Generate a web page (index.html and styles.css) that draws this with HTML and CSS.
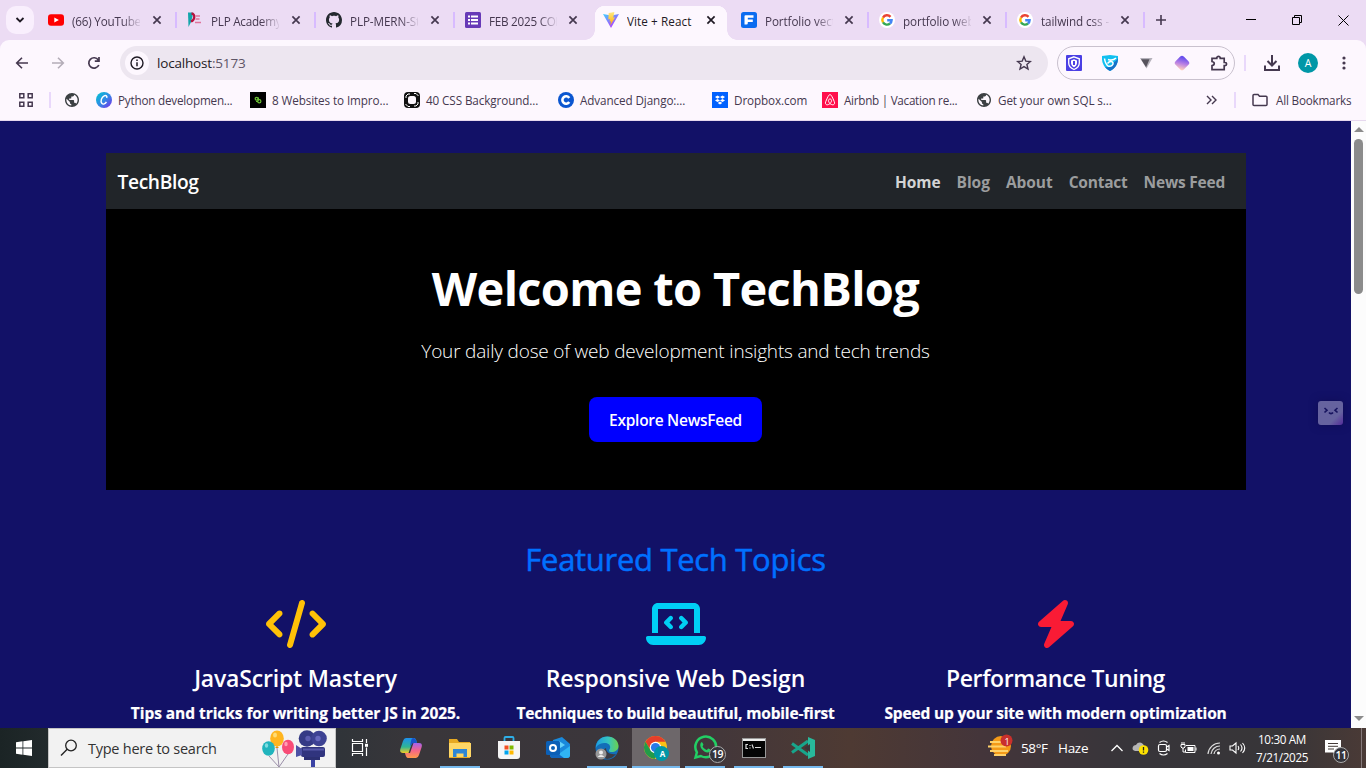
FILE: index.html
```html
<!DOCTYPE html>
<html lang="en">
<head>
<meta charset="utf-8">
<title>Vite + React</title>
<link rel="stylesheet" href="styles.css">
</head>
<body>
<svg class="defs" width="0" height="0">
  <defs>
    <symbol id="close" viewBox="0 0 10 10"><path d="M1.4 1.4l7.2 7.2M8.6 1.4L1.4 8.6" stroke="currentColor" stroke-width="1.7"/></symbol>
    <symbol id="google" viewBox="0 0 16 16"><circle cx="8" cy="8" r="8" fill="#fff"/><g fill="none" stroke-width="2.4"><path d="M11.5 4.9A4.6 4.6 0 0 0 4 5.6" stroke="#ea4335"/><path d="M4 5.6a4.7 4.7 0 0 0 0 4.8" stroke="#fbbc05"/><path d="M4 10.4a4.6 4.6 0 0 0 7 1.1" stroke="#34a853"/><path d="M11 11.5A4.4 4.4 0 0 0 12.6 8.2H8.2" stroke="#4285f4"/></g></symbol>
    <symbol id="globe" viewBox="2 2 20 20"><path fill="#3c4043" d="M12 2C6.480 2 2 6.480 2 12s4.480 10 10 10 10-4.480 10-10S17.520 2 12 2zm-1 17.930c-3.950-.49-7-3.850-7-7.930 0-.62.08-1.210.21-1.790L9 15v1c0 1.100.9 2 2 2v1.930zm6.900-2.540c-.26-.81-1-1.390-1.900-1.390h-1v-3c0-.55-.45-1-1-1H8v-2h2c.55 0 1-.45 1-1V7h2c1.100 0 2-.9 2-2v-.41c2.930 1.190 5 4.060 5 7.410 0 2.080-.8 3.970-2.100 5.390z"/></symbol>
  </defs>
</svg>
<div class="window">
  <div class="tabstrip">
    <button class="tab-search"><svg width="10" height="8" viewBox="0 0 10 8"><path d="M1.500 2l3.500 3.500L8.500 2" fill="none" stroke="#1f1a24" stroke-width="1.800"/></svg></button>
    <div class="tabs">
      <div class="tab wide first"><svg class="fav" viewBox="0 0 16 16"><rect y="2.200" width="16" height="11.600" rx="3" fill="#f00"/><path d="M6.300 5.400v5.200L10.900 8z" fill="#fff"/></svg><span class="name yt">(66) YouTube</span><svg class="x"><use href="#close"/></svg></div>
      <div class="tab wide"><svg class="fav" viewBox="0 0 16 16"><path d="M1 .5h4.500v4L4 10l-2.500 5z" fill="#12a5ab"/><path d="M4.500 1.500C9 2 7.500 8.500 4 9.500" fill="none" stroke="#b5123e" stroke-width="2.300"/><path d="M8.500 4h4.500M8.500 7h4M8 10.500h6" stroke="#e0749a" stroke-width="1.300"/></svg><span class="name plp">PLP Academy</span><svg class="x"><use href="#close"/></svg></div>
      <div class="tab wide"><svg class="fav" viewBox="0 0 16 16"><path fill="#24292f" d="M8 0C3.580 0 0 3.580 0 8c0 3.540 2.290 6.530 5.470 7.590.4.070.55-.17.55-.38 0-.19-.01-.82-.01-1.490-2.010.37-2.530-.49-2.690-.94-.09-.23-.48-.94-.82-1.130-.28-.15-.68-.52-.01-.53.63-.01 1.080.58 1.230.82.72 1.210 1.870.87 2.330.66.07-.52.28-.87.51-1.070-1.780-.2-3.640-.89-3.640-3.950 0-.87.31-1.590.82-2.150-.08-.2-.36-1.020.08-2.120 0 0 .67-.21 2.200.82.64-.18 1.320-.27 2-.27s1.360.09 2 .27c1.530-1.040 2.200-.82 2.200-.82.44 1.100.16 1.920.08 2.120.51.56.82 1.270.82 2.150 0 3.070-1.870 3.750-3.650 3.950.29.25.54.73.54 1.480 0 1.070-.01 1.930-.01 2.200 0 .21.15.46.55.38A8.010 8.010 0 0 0 16 8c0-4.420-3.580-8-8-8z"/></svg><span class="name mern">PLP-MERN-Stack</span><svg class="x"><use href="#close"/></svg></div>
      <div class="tab nosep"><svg class="fav" viewBox="0 0 16 16"><rect width="16" height="16" rx="1.500" fill="#673ab7"/><path d="M3 4.500h2M6 4.500h7M3 8h2M6 8h7M3 11.500h2M6 11.500h7" stroke="#fff" stroke-width="1.800"/></svg><span class="name feb">FEB 2025 COHORT</span><svg class="x"><use href="#close"/></svg></div>
      <div class="tab active nosep"><svg class="fav" viewBox="0 0 16 16"><defs><linearGradient id="v1" x2=".7" y2="1"><stop stop-color="#41d1ff"/><stop offset="1" stop-color="#bd34fe"/></linearGradient><linearGradient id="v2" x2="0" y2="1"><stop stop-color="#ffea83"/><stop offset="1" stop-color="#ffa800"/></linearGradient></defs><path d="M0 2l8 14 8-14-8 1.500z" fill="url(#v1)"/><path d="M11.400 0L5.700 1.100 5.300 7.500l1.800-.4-.5 2.600 1.500-.5-.9 4.300 5-8.200-2 .4z" fill="url(#v2)"/></svg><span class="name vite">Vite + React</span><svg class="x"><use href="#close"/></svg></div>
      <div class="tab"><svg class="fav" viewBox="0 0 16 16"><rect width="16" height="16" rx="2.500" fill="#0b6cf0"/><path d="M3.500 12.500V4.200q0-1 1-1h8v2.600H6.800v1.800h5v2.400h-5v1.200q0 1.300-1.300 1.300z" fill="#fff"/></svg><span class="name port">Portfolio vectors</span><svg class="x"><use href="#close"/></svg></div>
      <div class="tab"><svg class="fav"><use href="#google"/></svg><span class="name web">portfolio website</span><svg class="x"><use href="#close"/></svg></div>
      <div class="tab"><svg class="fav"><use href="#google"/></svg><span class="name tail">tailwind css - G</span><svg class="x"><use href="#close"/></svg></div>
    </div>
    <svg class="newtab" width="12" height="12" viewBox="0 0 12 12"><path d="M6 1v10M1 6h10" stroke="#45384f" stroke-width="1.600"/></svg>
    <div class="winctl">
      <svg width="10" height="10" viewBox="0 0 10 10"><path d="M0 4.500h10" stroke="#000"/></svg>
      <svg width="10" height="10" viewBox="0 0 10 10"><path d="M.5 2.500h7v7h-7zM2.500 2.500v-2h7v7h-2" fill="none" stroke="#000"/></svg>
      <svg width="11" height="11" viewBox="0 0 11 11"><path d="M.5.5l10 10M10.500.5l-10 10" stroke="#000"/></svg>
    </div>
  </div>

  <div class="toolbar">
    <svg class="nav" viewBox="0 0 16 16"><path d="M14 8H3M8 2.700L2.700 8 8 13.300" fill="none" stroke="#45384f" stroke-width="1.600"/></svg>
    <svg class="nav" viewBox="0 0 16 16"><path d="M2 8h11M8 2.700L13.300 8 8 13.300" fill="none" stroke="#b4adb8" stroke-width="1.600"/></svg>
    <svg class="nav" viewBox="0 0 16 16"><path d="M12.800 10A5.200 5.200 0 1 1 12.300 5M13 2v4.200H8.800" fill="none" stroke="#45384f" stroke-width="1.700"/></svg>
    <div class="omnibox">
      <span class="site"><svg width="14" height="14" viewBox="0 0 14 14"><circle cx="7" cy="7" r="6" fill="none" stroke="#1f1a24" stroke-width="1.400"/><path d="M7 6.200v4M7 3.600v1.500" stroke="#1f1a24" stroke-width="1.500"/></svg></span>
      <span class="url">localhost<i>:5173</i></span>
      <svg class="star" width="16" height="16" viewBox="0 0 16 16"><path d="M8 1.800l1.800 4.300 4.600.4-3.500 3 1.100 4.500L8 11.600 4 14l1.100-4.500-3.500-3 4.600-.4z" fill="none" stroke="#45384f" stroke-width="1.400"/></svg>
    </div>
    <div class="exts">
      <svg viewBox="0 0 16 16"><rect width="16" height="16" rx="1" fill="#4b3fe4"/><path d="M8 1.800l5.300 2V8c0 3-2.300 5.300-5.300 6.500C5 13.300 2.700 11 2.700 8V3.800z" fill="none" stroke="#fff" stroke-width="1.300"/><path d="M8 4.200l3 1.200V8c0 2-1.300 3.300-3 4.200-1.700-.9-3-2.200-3-4.200V5.400z" fill="#fff"/><path d="M8 6v4" stroke="#4b3fe4" stroke-width="2"/></svg>
      <svg viewBox="0 0 16 16"><path d="M0 1l8-1 8 1c.5 7-2 12-8 15C2 13-.5 8 0 1z" fill="#12c0f0"/><path d="M16 3c0 6-2.500 10.500-8 13-2.500-1.200-4-2.500-5-4 5 1 9-1 9-5 1.500-.5 3-2 4-4z" fill="#1671c9"/><path d="M2.500 3.500c.5 3.500 1.500 6 3.500 7.500 3 .8 5.500-1 5-3C10.500 6 7.500 6 5.500 8.500M6 4.500c3 1 6 .5 8-1.500" fill="none" stroke="#fff" stroke-width="1.500"/></svg>
      <svg viewBox="0 0 16 16"><path d="M2 3h12.500L8.500 13.500z" fill="#b5b2bb"/><path d="M3 4.200h8.500l-3.400 8z" fill="#56525c"/></svg>
      <svg viewBox="0 0 16 16"><defs><linearGradient id="dm" x1=".2" y1="0" x2=".8" y2="1"><stop offset=".1" stop-color="#6950ed"/><stop offset=".55" stop-color="#b980e4"/><stop offset="1" stop-color="#ffd0bd"/></linearGradient></defs><rect x="2.200" y="2.200" width="11.600" height="11.600" rx="2.500" transform="rotate(45 8 8)" fill="url(#dm)"/></svg>
      <svg class="puzzle" viewBox="0 0 18 18"><path d="M2 4.300h4.800V3.500a1.800 1.800 0 0 1 3.400 0v.8h4v4.200h.8a1.600 1.600 0 0 1 0 3.200h-.8v4H2v-4c3-.6 3-3.600 0-4.200z" fill="none" stroke="#45384f" stroke-width="1.700"/></svg>
    </div>
    <span class="bar"></span>
    <svg class="dl" width="18" height="18" viewBox="0 0 18 18"><path d="M9 1v10M4.500 7L9 11.500 13.500 7M2 11.500V16h14v-4.500" fill="none" stroke="#45384f" stroke-width="2"/></svg>
    <span class="avatar">A</span>
    <svg class="dots" width="4" height="16" viewBox="0 0 4 16"><g fill="#45384f"><circle cx="2" cy="3" r="1.600"/><circle cx="2" cy="8" r="1.600"/><circle cx="2" cy="13" r="1.600"/></g></svg>
  </div>

  <div class="bookmarks">
    <svg class="apps" width="14" height="14" viewBox="0 0 14 14"><path d="M.8.8h4v4h-4zM9.200.8h4v4h-4zM.8 9.200h4v4h-4zM9.200 9.200h4v4h-4z" fill="none" stroke="#45384f" stroke-width="1.500"/></svg>
    <span class="bar"></span>
    <svg class="globe"><use href="#globe"/></svg>
    <div class="bm"><svg viewBox="0 0 16 16"><defs><linearGradient id="cv" x2="1" y2="1"><stop stop-color="#00c9cf"/><stop offset=".5" stop-color="#2f8be6"/><stop offset="1" stop-color="#7d2ae8"/></linearGradient></defs><circle cx="8" cy="8" r="8" fill="url(#cv)"/><path d="M10.700 6c.8-2-.8-2.900-2.500-2.200C5.500 5 4.200 9.200 5.800 11.300c1.300 1.500 3.600.7 4.600-1.400" fill="none" stroke="#fff" stroke-width="1.400"/></svg><span class="b1">Python developmen...</span></div>
    <div class="bm"><svg viewBox="0 0 16 16"><rect width="16" height="16"/><circle cx="6.600" cy="6.700" r="1.400" fill="none" stroke="#6cc335" stroke-width="1.200"/><circle cx="9.300" cy="9.300" r="1.600" fill="none" stroke="#6cc335" stroke-width="1.200"/><path d="M8.500 5.500v3M6 9.500h2" stroke="#6cc335"/></svg><span class="b2">8 Websites to Impro...</span></div>
    <div class="bm"><svg viewBox="0 0 16 16"><rect width="16" height="16" rx="4" fill="#111"/><rect x="4" y="4" width="8" height="8" rx="2.500" fill="#fdf7fe"/><path d="M2 6V4l2-2h2M10 1.500h2L14.500 4M14 10v2l-2 2h-2M6 14.500H4L1.500 12" fill="none" stroke="#fff" stroke-width="1"/></svg><span class="b3">40 CSS Background...</span></div>
    <div class="bm"><svg viewBox="0 0 16 16"><circle cx="8" cy="8" r="8" fill="#0b56d0"/><path d="M11.200 6A3.700 3.700 0 1 0 11.200 10" fill="none" stroke="#fff" stroke-width="2.600"/></svg><span class="b4">Advanced Django:...</span></div>
    <div class="bm short"><svg viewBox="0 0 16 16"><rect width="16" height="16" fill="#0061fe"/><path d="M5.500 3.500L8 5 5.500 6.700 3 5zM10.500 3.500L13 5l-2.500 1.700L8 5zM5.500 6.900L8 8.500l-2.500 1.600L3 8.500zM10.500 6.900L13 8.500l-2.500 1.600L8 8.500zM8 9.500l2.300 1.500L8 12.500 5.700 11z" fill="#fff"/></svg><span class="b5">Dropbox.com</span></div>
    <div class="bm"><svg viewBox="0 0 16 16"><rect width="16" height="16" fill="#ff0f4b"/><path d="M8 11.500C5.500 9 6.400 7 8 7s2.500 2 0 4.500c-2 2-4.600 1.600-4.600-.6C3.400 9.800 6.200 4 6.800 3.300c.7-.8 1.700-.8 2.400 0 .6.700 3.400 6.500 3.400 7.600 0 2.200-2.600 2.600-4.600.6z" fill="none" stroke="#fff" stroke-width="1"/></svg><span class="b6">Airbnb | Vacation re...</span></div>
    <div class="bm last"><svg class="small"><use href="#globe"/></svg><span class="b7">Get your own SQL s...</span></div>
    <svg class="more" width="11" height="10" viewBox="0 0 11 10"><path d="M1 1l4 4-4 4M6 1l4 4-4 4" fill="none" stroke="#45384f" stroke-width="1.400"/></svg>
    <span class="bar b"></span>
    <svg class="folder" width="16" height="14" viewBox="0 0 16 14"><path d="M1 11.500v-9q0-1 1-1h4l1.500 1.700H14q1 0 1 1v7.300q0 1-1 1H2q-1 0-1-1z" fill="none" stroke="#45384f" stroke-width="1.500"/></svg>
    <span class="all">All Bookmarks</span>
  </div>

  <div class="viewport">
    <main class="page">
      <nav class="navbar">
        <a class="brand">TechBlog</a>
        <div class="links"><a class="on">Home</a><a class="l2">Blog</a><a class="l3">About</a><a class="l4">Contact</a><a class="l5">News Feed</a></div>
      </nav>
      <section class="hero">
        <h1>Welcome to TechBlog</h1>
        <p>Your daily dose of web development insights and tech trends</p>
        <button class="cta">Explore NewsFeed</button>
      </section>
      <h2>Featured Tech Topics</h2>
      <section class="topics">
        <article><svg width="60" height="48" viewBox="0 0 640 512" fill="#ffc107"><path d="M392.800 1.200c-17-4.900-34.700 5-39.600 22l-128 448c-4.900 17 5 34.700 22 39.600s34.700-5 39.600-22l128-448c4.900-17-5-34.700-22-39.600zm80.600 120.100c-12.500 12.500-12.500 32.800 0 45.300L562.700 256l-89.400 89.400c-12.500 12.500-12.500 32.800 0 45.300s32.800 12.500 45.300 0l112-112c12.500-12.500 12.500-32.800 0-45.300l-112-112c-12.500-12.500-32.800-12.500-45.300 0zm-306.700 0c-12.500-12.500-32.800-12.500-45.300 0l-112 112c-12.500 12.500-12.500 32.800 0 45.300l112 112c12.500 12.500 32.800 12.500 45.300 0s12.500-32.800 0-45.300L77.300 256l89.400-89.400c12.500-12.500 12.500-32.800 0-45.300z"/></svg><h3 class="h-js">JavaScript Mastery</h3><p class="p-js">Tips and tricks for writing better JS in 2025.</p></article>
        <article><svg width="60" height="48" viewBox="0 0 640 512" fill="#00cff5"><path d="M64 96c0-35.300 28.700-64 64-64H512c35.300 0 64 28.700 64 64V352H512V96H128V352H64V96zM0 403.200C0 392.600 8.600 384 19.200 384H620.800c10.600 0 19.200 8.600 19.200 19.200c0 42.400-34.400 76.800-76.800 76.800H76.800C34.400 480 0 445.600 0 403.200zM281 209l-31 31 31 31c9.400 9.400 9.400 24.600 0 33.900s-24.600 9.400-33.900 0l-48-48c-9.400-9.400-9.400-24.600 0-33.900l48-48c9.400-9.400 24.600-9.400 33.900 0s9.400 24.600 0 33.900zM393 175l48 48c9.400 9.400 9.400 24.600 0 33.900l-48 48c-9.400 9.400-24.600 9.400-33.900 0s-9.400-24.600 0-33.900l31-31-31-31c-9.400-9.400-9.400-24.600 0-33.900s24.600-9.400 33.900 0z"/></svg><h3 class="h-rw">Responsive Web Design</h3><p class="p-rw">Techniques to build beautiful, mobile-first</p></article>
        <article><svg width="42" height="48" viewBox="0 0 448 512" fill="#f91b35"><path d="M349.400 44.600c5.900-13.700 1.500-29.700-10.600-38.500s-28.600-8-39.900 1.800l-256 224c-10 8.800-13.600 22.900-8.900 35.300S50.700 288 64 288H175.500L98.600 467.400c-5.900 13.700-1.500 29.700 10.600 38.500s28.600 8 39.900-1.800l256-224c10-8.800 13.600-22.900 8.900-35.300s-16.600-20.700-30-20.700H272.500L349.400 44.600z"/></svg><h3 class="h-pt">Performance Tuning</h3><p class="p-pt">Speed up your site with modern optimization</p></article>
      </section>
      <div class="helper"><svg width="16" height="8" viewBox="0 0 16 8"><path d="M1.500 1l2.500 2.200-2.500 2.300M14.500 1L12 3.200l2.500 2.300M6 5.500c1 1.500 3 1.500 4 0" fill="none" stroke="#17145f" stroke-width="1.600"/></svg></div>
    </main>
    <div class="scroll"><i class="up"></i><span class="thumb"></span><i class="down"></i></div>
  </div>

  <div class="taskbar">
    <div class="start"><svg width="16" height="16" viewBox="0 0 16 16"><path d="M0 2.200L6.500 1.300v6.300H0zM7.300 1.200L16 0v7.600H7.300zM0 8.400h6.500v6.300L0 13.800zM7.300 8.400H16V16l-8.700-1.200z" fill="#fff"/></svg></div>
    <div class="search">
      <svg width="18" height="18" viewBox="0 0 18 18"><circle cx="11" cy="6.500" r="5.300" fill="none" stroke="#222" stroke-width="1.300"/><path d="M7.200 10.300L1 16.500" stroke="#222" stroke-width="1.400"/></svg>
      <span>Type here to search</span>
      <svg class="art" width="66" height="38" viewBox="0 0 66 38"><path d="M7 27l10 11L15 19M26 25L17 38" fill="none" stroke="#9a8ea8"/><ellipse cx="15" cy="9.500" rx="6.800" ry="8" fill="#ffb51f"/><path d="M13 19l2-2 2 2z" fill="#e89000"/><ellipse cx="6.500" cy="19.500" rx="6.300" ry="7.300" fill="#21b4bd"/><ellipse cx="26" cy="18" rx="6" ry="7.300" fill="#f84c77"/><ellipse cx="13" cy="6" rx="2" ry="2.500" fill="#ffdc74"/><ellipse cx="4.500" cy="16.500" rx="1.700" ry="2.200" fill="#80dce0"/><ellipse cx="24" cy="15" rx="1.700" ry="2.200" fill="#ff9eb4"/><path d="M49 28h4v10h-4z" fill="#3b43a5"/><path d="M42 27h16v4H42z" fill="#2b2f72"/><rect x="39" y="18" width="24" height="10" rx="2" fill="#30347e"/><path d="M34 16l6 4v6l-6 2z" fill="#4d52a5"/><circle cx="45" cy="9.500" r="8.300" fill="#343a85"/><circle cx="57" cy="9.500" r="7.800" fill="#3d4293"/><circle cx="46" cy="9.500" r="2.700" fill="#5a5cb0"/><circle cx="56" cy="9.500" r="2.700" fill="#6668be"/><path d="M41 20.500h21" stroke="#5658ab" stroke-width="2"/></svg>
    </div>
    <div class="apps-row">
      <div class="app view"><svg width="18" height="18" viewBox="0 0 18 18"><path d="M1.500 4.500h10v8h-10zM1.500 0v2.500h10V0M1.500 17v-2.500h10V17M15.500 0v4M15.500 8.500V17" fill="none" stroke="#fff" stroke-width="1.200"/><path d="M14 4.800h3v3h-3z" fill="#fff"/></svg></div>
      <div class="app"><svg width="24" height="24" viewBox="0 0 24 24"><defs><linearGradient id="c1" x2="0" y2="1"><stop stop-color="#1d90ee"/><stop offset=".6" stop-color="#30b693"/><stop offset="1" stop-color="#f4ce25"/></linearGradient><linearGradient id="c2" x2="0" y2="1"><stop stop-color="#a462ed"/><stop offset=".5" stop-color="#f46589"/><stop offset="1" stop-color="#ff9a4a"/></linearGradient></defs><path d="M7 2h8q2 0 3 5h-5L9.500 17H4Q-.5 17 2 11L4 5Q5 2 7 2z" fill="url(#c1)"/><path d="M17 22H9q-2 0-3-5h5L14.500 7H20q4.500 0 2 6l-2 6q-1 3-3 3z" fill="url(#c2)"/><path d="M14 2q3 0 4 5h-4l-3 3 1-5q.5-3 2-3z" fill="#1753ca"/></svg></div>
      <div class="app run"><svg width="24" height="24" viewBox="0 0 24 24"><path d="M1 3h8l2 3h11v16H1z" fill="#e7a922"/><path d="M1 7h22v14H1z" fill="#ffd766"/><path d="M5 13h14v8h-3.500v-3.500h-7V21H5z" fill="#2f86d4"/></svg></div>
      <div class="app"><svg width="24" height="24" viewBox="0 0 24 24"><path d="M7.500 6V2q0-1 1-1h7q1 0 1 1v4" fill="none" stroke="#2eaee7" stroke-width="1.800"/><path d="M1 5h22v15q0 3-3 3H4q-3 0-3-3z" fill="#f5f5f5"/><path d="M7.500 9.500h4v4h-4z" fill="#f25022"/><path d="M12.500 9.500h4v4h-4z" fill="#7fba00"/><path d="M7.500 14.500h4v4h-4z" fill="#00a4ef"/><path d="M12.500 14.500h4v4h-4z" fill="#ffb900"/></svg></div>
      <div class="app"><svg width="24" height="24" viewBox="0 0 24 24"><path d="M7 4l9-3 8 7v11q0 3-3 3H7q-3 0-3-3z" fill="#1989dc"/><path d="M13 5l6 4-8 5z" fill="#64d1fa"/><path d="M24 10L7 22h14q3 0 3-3z" fill="#30b5f3"/><path d="M4 12l14 10H7q-3 0-3-3z" fill="#1266bd"/><rect y="5" width="14" height="14" rx="1.500" fill="#0b60b7"/><circle cx="7" cy="12" r="3" fill="none" stroke="#fff" stroke-width="2"/></svg></div>
      <div class="app run"><svg width="24" height="24" viewBox="0 0 24 24"><defs><linearGradient id="e1"><stop stop-color="#1d9de2"/><stop offset=".55" stop-color="#36c5c0"/><stop offset="1" stop-color="#6bd14d"/></linearGradient></defs><circle cx="12" cy="12" r="11.500" fill="#136eb8"/><path d="M.8 12C1 5 6 .5 12.500.5c6.500 0 11 4.500 11 9.500 0 4-3.500 6-7 6-3 0-3-1.500-1.500-3.500C16 9 13 6.500 9 7 5 7.200 2 9 .8 12z" fill="url(#e1)"/><path d="M11 12c0 4 4 7 10 6-2 2.500-5 5-9 5-6-1-6-9-1-11z" fill="#3c3b42"/><circle cx="6" cy="18" r="5.500" fill="#989899"/><circle cx="6" cy="16.500" r="2" fill="#eee"/><path d="M2.500 21q3.500-4 7 0z" fill="#eee"/></svg></div>
      <div class="app run current"><svg width="26" height="26" viewBox="0 0 26 26"><circle cx="12.500" cy="12.500" r="11.500" fill="#fbc116"/><path d="M2.500 6.800A11.500 11.500 0 0 1 22.500 6.800H12.500L7.500 15.300z" fill="#e43e2b"/><path d="M2.500 6.800a11.500 11.500 0 0 0 9 17.200l5-8.700H7.500z" fill="#229b49"/><circle cx="12.500" cy="12.500" r="5.800" fill="#fff"/><circle cx="12.500" cy="12.500" r="4.600" fill="#2879e9"/><circle cx="18.500" cy="18.500" r="7.500" fill="#0097a7"/></svg><b class="mini">A</b></div>
      <div class="app run"><svg width="26" height="26" viewBox="0 0 26 26"><path d="M3.500 22.500l1.400-5.200A10.400 10.400 0 1 1 8.800 21z" fill="none" stroke="#22cf64" stroke-width="2.500"/><path d="M9 7.500c1.200-1 1.800.4 2.400 2 .2.800-1.100 1.600-.8 2.100 1 1.700 2.200 2.700 4 3.400.8 0 1.100-1.500 1.800-1.400 3 1.200 2.200 2 1.600 2.900-4 3.500-12.300-4-9-9z" fill="#22cf64"/></svg><b class="count">19</b></div>
      <div class="app run"><svg width="24" height="20" viewBox="0 0 24 20"><rect x=".5" y=".5" width="23" height="19" fill="#050505" stroke="#999"/><path d="M1 2h22" stroke="#eee" stroke-width="2"/><path d="M6 6.500H4v4h2M8 7v1M8 9.500v1M10 6.500l1.500 4M13 9.500h6" fill="none" stroke="#ddd" stroke-width="1.200"/></svg></div>
      <div class="app run"><svg width="24" height="24" viewBox="0 0 24 24"><path d="M1 7.500L17 19M1 16.500L17 5" stroke="#18a58b" stroke-width="3"/><path d="M17 1l7 3v16l-7 3z" fill="#28b99b"/><path d="M19 8v8l-5.500-4z" fill="#3a3438"/></svg></div>
    </div>
    <div class="tray">
      <svg class="weather" width="26" height="24" viewBox="0 0 26 24"><circle cx="13" cy="12" r="10" fill="#f49a18"/><path d="M2 8h17M0 12.500h18M2 17h18M6 21h12" stroke="#ffd168" stroke-width="2.200"/><circle cx="18.500" cy="6.500" r="6" fill="#c9302c"/></svg><b class="alert">1</b>
      <span class="temp">58°F</span><span class="haze">Haze</span>
      <svg class="chev" width="12" height="8" viewBox="0 0 12 8"><path d="M.5 7L6 1.500 11.500 7" fill="none" stroke="#fff" stroke-width="1.300"/></svg>
      <svg class="cloud" width="17" height="14" viewBox="0 0 17 14"><path d="M1 9C-.5 6 2 4 4 4c2-4 7-3 8 1 3 0 3 5 0 5H3z" fill="#b5b5b5"/><circle cx="11.500" cy="9" r="4.800" fill="#fce100"/><path d="M11.500 6v3.500M11.500 10.500v1.200" stroke="#222" stroke-width="1.300"/></svg>
      <svg class="meet" width="14" height="16" viewBox="0 0 14 16"><rect x="1.500" y="4.500" width="8" height="7" rx="1.500" fill="none" stroke="#fff" stroke-width="1.200"/><path d="M9.500 7l2.500-1.500v5L9.500 9M2.500 2.500q4-3 8 0M2.500 13.500q4 3 8 0" fill="none" stroke="#fff" stroke-width="1.200"/></svg>
      <svg class="batt" width="17" height="12" viewBox="0 0 17 12"><path d="M6 3.500h9v7H5.500v-3M16 5.500v3" fill="none" stroke="#fff"/><path d="M7.500 5H13.500v4H7.500z" fill="#fff"/><path d="M1 2.500h4v2.500l-1 1H2L1 5zM2 0v2M4 0v2M3 6v4h2" fill="none" stroke="#fff"/></svg>
      <svg class="wifi" width="14" height="14" viewBox="0 0 14 14"><g fill="none" stroke="#ddd" stroke-width="1.200"><path d="M1 13A12 12 0 0 1 13 2"/><path d="M4 13a9 9 0 0 1 9-8"/><path d="M7 13a6 6 0 0 1 6-5"/></g><circle cx="11.500" cy="12" r="1.500" fill="#fff"/></svg>
      <svg class="vol" width="17" height="14" viewBox="0 0 17 14"><path d="M1 5v4h2.500L7 12V2L3.500 5zM9 5q1.500 2 0 4M11.500 3.500q3 3.500 0 7M13.500 2q4.500 5 0 10" fill="none" stroke="#fff" stroke-width="1.100"/></svg>
      <div class="clock"><span>10:30 AM</span><span class="date">7/21/2025</span></div>
      <div class="note"><svg width="17" height="17" viewBox="0 0 17 17"><path d="M0 0h16v12.500h-4V16l-4-3.500H0z" fill="#fff"/><path d="M3 3.500h10M3 6.300h10M3 9h6" stroke="#453c39"/></svg><b class="count">11</b></div>
      <span class="peek"></span>
    </div>
  </div>
</div>
</body>
</html>
```
FILE: styles.css
```css
* { box-sizing: border-box; }
body { margin: 0; overflow: hidden; font-family: "Open Sans", "Noto Sans", sans-serif; }
svg { display: block; flex: none; }
.defs { position: absolute; }
button { border: 0; padding: 0; font-family: inherit; }
span, a, p, h1, h2, h3 { white-space: nowrap; }
.window { width: 1366px; height: 768px; display: flex; flex-direction: column; overflow: hidden; background: #ecdcf4; }

/* tab strip */
.tabstrip { height: 40px; display: flex; align-items: center; padding-left: 6px; flex: none; }
.tab-search { width: 28px; height: 28px; border-radius: 10px; background: #f9effd; display: flex; align-items: center; justify-content: center; }
.tabs { display: flex; height: 40px; padding-left: 5px; }
.tab { width: 138px; height: 40px; padding-left: 9px; display: flex; align-items: center; position: relative; }
.tab.wide { width: 139px; }
.tab::after { content: ""; position: absolute; right: 1px; top: 12px; width: 2px; height: 16px; background: #d8bbff; }
.tab.nosep::after { display: none; }
.fav { width: 16px; height: 16px; }
.name { width: 68px; margin: 2px 0 0 8px; overflow: hidden; font-size: 11.700px; line-height: 20px; color: #45384f; letter-spacing: -.1px; -webkit-mask-image: linear-gradient(90deg, #000 50px, transparent 70px); }
.yt { letter-spacing: -.2px; }
.plp, .feb { letter-spacing: -.25px; }
.vite { letter-spacing: .08px; }
.x { width: 10px; height: 10px; margin-left: 11px; color: #45384f; }
.wide .x { margin-left: 12px; }
.active .name { color: #1f1a24; -webkit-mask-image: none; }
.active .x { color: #1f1a24; }
.tab.active > * { z-index: 1; }
.tab.active::before { content: ""; position: absolute; left: -9px; right: -5px; top: 6px; bottom: 0;
  background:
    radial-gradient(circle at 0 24px, transparent 9.500px, #fdf7fe 10px) left bottom / 10px 34px no-repeat,
    radial-gradient(circle at 10px 24px, transparent 9.500px, #fdf7fe 10px) right bottom / 10px 34px no-repeat;
  clip-path: polygon(0 24px, 100% 24px, 100% 100%, 0 100%); }
.tab.active { background: linear-gradient(#fdf7fe, #fdf7fe) 1px 16px / 132px 24px no-repeat, radial-gradient(circle at 11px 16px, #fdf7fe 10px, transparent 10.500px) 0 0 / 12px 16px no-repeat, radial-gradient(circle at 3px 16px, #fdf7fe 10px, transparent 10.500px) 120px 0 / 14px 16px no-repeat, linear-gradient(#fdf7fe, #fdf7fe) 11px 6px / 112px 10px no-repeat; }
.newtab { margin-left: 9px; }
.winctl { margin-left: auto; display: flex; align-items: center; gap: 36px; padding-right: 17px; }

/* toolbar */
.toolbar { height: 46px; flex: none; background: #fdf7fe; border-radius: 9px 9px 0 0; display: flex; align-items: center; padding-left: 14px; }
.nav { width: 16px; height: 16px; margin-right: 20px; }
.omnibox { width: 928px; height: 34px; margin-left: -2px; border-radius: 17px; background: #ede6f0; display: flex; align-items: center; padding: 0 16px 0 5px; }
.site { width: 24px; height: 24px; border-radius: 12px; background: #fdf7fe; display: flex; align-items: center; justify-content: center; }
.url { font-size: 13.500px; margin-left: 8px; color: #1f1a24; letter-spacing: -.18px; }
.url i { font-style: normal; color: #5e5566; }
.star { margin-left: auto; }
.exts { margin-left: 9px; width: 178px; height: 34px; border: 1px solid #c9c1ce; border-radius: 17px; display: flex; align-items: center; padding-left: 8px; gap: 20px; }
.exts svg { width: 16px; height: 16px; }
.exts .puzzle { width: 18px; height: 18px; }
.bar { width: 2px; height: 16px; background: #e9d8fb; flex: none; }
.toolbar .bar { margin-left: 9px; }
.dl { margin-left: 17px; }
.avatar { width: 20px; height: 20px; margin-left: 17px; border-radius: 10px; background: #0097a7; color: #fff; font-size: 10.500px; line-height: 20px; text-align: center; }
.dots { margin-left: 24px; }

/* bookmarks */
.bookmarks { height: 35px; flex: none; background: #fdf7fe; border-bottom: 1px solid #e6d8ee; display: flex; align-items: center; padding: 0 0 6px 19px; font-size: 11.700px; color: #45384f; }
.bookmarks .bar { margin-left: 16px; }
.globe { width: 14px; height: 14px; margin: 0 17px 0 14px; }
.bm { width: 154px; display: flex; align-items: center; gap: 6px; letter-spacing: -.1px; }
.b1 { letter-spacing: -.2px; }
.b6 { letter-spacing: -.27px; }
.bm svg { width: 16px; height: 16px; }
.bm svg.small { width: 14px; height: 14px; }
.bm.short { width: 110px; }
.bm.last { padding-left: 1px; gap: 7px; }
.more { margin-left: 76px; }
.bookmarks .bar.b { margin-left: 17px; }
.folder { margin-left: 16px; }
.all { margin-left: 8px; letter-spacing: -.2px; }

/* page */
.viewport { height: 607px; flex: none; display: flex; }
.page { width: 1351px; height: 607px; background: #121167; padding: 32px 105.500px 0; overflow: hidden; position: relative; }
.navbar { height: 56px; background: #212529; display: flex; align-items: center; justify-content: space-between; padding: 0 20.500px 0 12px; }
.brand { color: #fff; font-size: 19.200px; font-weight: 600; letter-spacing: -.35px; }
.links { display: flex; gap: 16px; font-size: 15.500px; font-weight: 700; color: #9b9d9e; letter-spacing: -.05px; padding-top: 1px; }
.links .on { color: #d3d4d5; }
.l4, .l5 { letter-spacing: -.22px; }
.hero { height: 281px; background: #000; color: #fff; padding-top: 50px; display: flex; flex-direction: column; align-items: center; }
h1 { margin: 0; font-size: 47px; line-height: 58px; font-weight: 700; letter-spacing: -.680px; }
.hero p { margin: 19px 0 0; font-size: 19px; line-height: 30px; font-weight: 300; letter-spacing: -.19px; }
.cta { margin-top: 31px; width: 173px; height: 45px; border-radius: 8px; background: #00f; color: #fff; font-size: 15.500px; font-weight: 600; letter-spacing: -.28px; }
h2 { margin: 49px 0 0; text-align: center; font-size: 31px; line-height: 40px; font-weight: 500; letter-spacing: -.3px; color: #0070ff; -webkit-text-stroke: .5px #0070ff; }
.topics { display: grid; grid-template-columns: repeat(3, 380px); margin-top: 21px; color: #fff; }
article { display: flex; flex-direction: column; align-items: center; }
h3 { margin: 16px 0 0; font-size: 23px; line-height: 29px; font-weight: 600; }
.h-js { letter-spacing: -.18px; }
.h-rw { letter-spacing: -.1px; }
.h-pt { letter-spacing: -.4px; }
article p { margin: 8px 0 0; font-size: 15.500px; line-height: 24px; font-weight: 700; -webkit-text-stroke: .2px #fff; }
.p-js { letter-spacing: -.05px; }
.p-rw, .p-pt { letter-spacing: -.17px; }
.helper { position: absolute; left: 1318px; top: 280px; width: 25px; height: 24px; border-radius: 3px; background: linear-gradient(135deg, #66639f 70%, #542b9a); display: flex; justify-content: center; padding-top: 6px; box-shadow: 0 0 8px #100d55; }
.scroll { width: 15px; background: #fcfcfc; display: flex; flex-direction: column; align-items: center; }
.up, .down { border: 5px solid transparent; border-top: 0; border-bottom: 5px solid #8b8b8b; margin-top: 6px; }
.thumb { width: 9px; height: 155px; border-radius: 5px; background: #8b8b8b; margin-top: 7px; }
.down { transform: rotate(180deg); margin: auto 0 7px; }

/* taskbar */
.taskbar { height: 40px; flex: none; display: flex; background: linear-gradient(90deg, #1b2425 0, #222a2c 50px, #303439 340px, #39363a 420px, #3b363b 600px, #43373a 720px, #4e3a33 850px, #44353a 980px, #37353a 1130px, #373538 1280px, #4a3a36 1366px); }
.start { width: 48px; padding: 12px 0 0 16px; }
.search { width: 288px; background: #f2f2f2; border: 1px solid #c4c4c4; display: flex; align-items: center; padding-left: 11px; color: #333; font-size: 14.500px; letter-spacing: -.25px; }
.search span { width: 174px; margin-left: 10px; }
.apps-row { display: flex; gap: 1px; }
.app { width: 48px; height: 40px; display: flex; align-items: center; justify-content: center; position: relative; }
.app.view { margin-right: 2px; }
.app.run::after { content: ""; position: absolute; left: 4px; right: 4px; bottom: 0; height: 2px; background: #76b9ed; }
.app.current { background: #6d676a; }
.app.current::after { left: 0; right: 0; }
.mini { position: absolute; left: 23px; top: 19px; width: 15px; text-align: center; color: #fff; font-size: 8px; line-height: 14px; }
.count { position: absolute; left: 28px; top: 18px; width: 17px; height: 17px; border-radius: 9px; border: 1px solid #aaa; background: #35343a; color: #fff; font-size: 10.500px; font-weight: 600; line-height: 15px; text-align: center; letter-spacing: -.6px; }
.tray { margin-left: auto; display: flex; align-items: center; color: #fff; font-size: 13.500px; position: relative; }
.alert { position: absolute; left: 14px; top: 8px; width: 10px; text-align: center; font-size: 9px; line-height: 12px; font-weight: 400; }
.temp { width: 29px; margin-left: 7px; letter-spacing: -.4px; }
.haze { width: 31px; margin-left: 8px; letter-spacing: -.3px; }
.weather { margin-top: -4px; }
.chev { margin-left: 22px; }
.cloud { margin-left: 9px; }
.meet { margin-left: 8px; }
.batt { margin-left: 9px; }
.wifi { margin-left: 10px; }
.vol { margin-left: 8px; }
.clock { width: 56px; margin-left: 8px; display: flex; flex-direction: column; align-items: center; font-size: 11.700px; line-height: 18px; letter-spacing: -.35px; }
.note { width: 24px; height: 40px; margin-left: 15px; padding-top: 12px; position: relative; }
.note .count { left: 8px; top: 19px; width: 16px; height: 16px; line-height: 14px; }
.peek { width: 1px; height: 40px; background: #85797a; margin: 0 4px 0 12px; }
```
